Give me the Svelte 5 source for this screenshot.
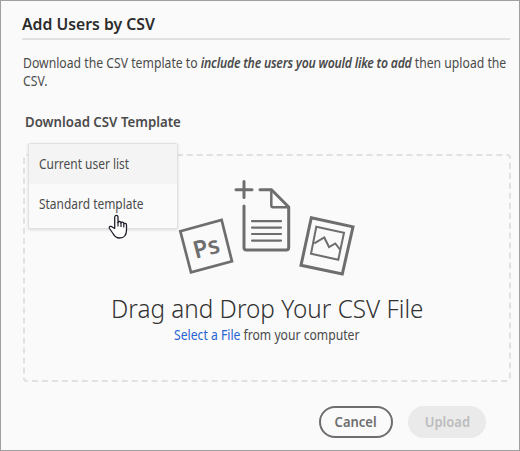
<script>
  const options = ['Current user list', 'Standard template'];
  let active = $state(0);
</script>

<main class="dialog">
  <h1><span class="fit">Add Users by CSV</span></h1>
  <p class="intro">
    <span class="fit">Download the CSV template to <strong>include the users you would like to add</strong> then upload the<br />CSV.</span>
  </p>
  <h2><span class="fit">Download CSV Template</span></h2>

  <section class="drop">
    <div class="menu" role="menu">
      {#each options as option, i}
        <div class="option" class:active={i === active} role="menuitem" tabindex="-1"><span class="fit">{option}</span></div>
      {/each}
    </div>
    <svg class="art" width="180" height="100" viewBox="177 178 180 100" fill="none" stroke="#6e6e6e">
      <path d="M180.3 231.2 221.600 220 232 261.400 191 272.300Z" stroke-width="2.7" />
      <text x="-14" y="8.500" transform="translate(207 247) rotate(-14.5)" class="ps">Ps</text>
      <g stroke-width="3" stroke-linecap="round">
        <path d="M244 181.5V197.500M236 189.700H252" />
        <path d="M260 189.700H271.500L288.700 207V247.500Q288.700 250 286.200 250H246.500Q244 250 244 247.500V206" stroke-linejoin="round" />
        <path d="M271.300 190V205.500Q271.300 207.300 273 207.300H288" stroke-width="2.5" />
      </g>
      <path d="M252 221.200H281M252 227.600H281M252 234H281M252 240.600H281" stroke-width="2.200" stroke-linecap="round" />
      <path d="M311.300 217.700 353 226.800 342.300 274 301 265.300Z" stroke-width="3" />
      <path d="M316.300 226.700 344 232.700 338.300 259.700 311 253.700ZM314.300 243.300 324.300 237.500 329 247 335.300 243.500 340 249.500" stroke-width="2" />
    </svg>
    <div class="title">Drag and Drop Your CSV File</div>
    <div class="hint"><a href="#file">Select a File</a> from your computer</div>
    <svg class="cursor" width="20" height="26" viewBox="0 0 20 26">
      <path d="M6.700 14.500V3.500C6.700 .7 10 .7 10 3.500V8.500C10.500 7 13 7.200 13 9C13.600 7.600 15.800 8 15.800 9.800C16.500 8.900 18.500 9.200 18.500 11V16C18.500 19.500 17 24 11.500 24C7.500 24 6.500 22 5 19.500L1.500 14.500C.5 12.500 3 11.500 4.500 13.200Z" fill="#fff" stroke="#20202e" stroke-width="1.300" stroke-linejoin="round" />
      <path d="M10 8V12.500M13 9V13M15.800 10V13.500" fill="none" stroke="#20202e" stroke-width="1.200" />
    </svg>
  </section>

  <footer>
    <button class="cancel"><span class="fit">Cancel</span></button>
    <button class="upload" disabled><span class="fit">Upload</span></button>
  </footer>
</main>

<style>
  :global(body) { background: #fafafa; }
  .dialog {
    box-sizing: border-box;
    width: 520px;
    height: 451px;
    border: 1px solid #a0a0a0;
    padding: 12px 9px 0 21px;
    display: flex;
    flex-direction: column;
    background: #fafafa;
    color: #4b4b4b;
    font: 14px/18px "Noto Sans", "Open Sans", sans-serif;
    white-space: nowrap;
  }
  .fit { display: inline-block; transform: scaleX(var(--fit)); transform-origin: 0 50%; }
  h1 {
    --fit: .985;
    margin: 0;
    height: 25px;
    border-bottom: 2px solid #e1e1e1;
    color: #2c2c2c;
    font-size: 16px;
    font-weight: 600;
    line-height: 22px;
  }
  .intro { --fit: .872; margin: 14px 0 0 1px; height: 36px; overflow: hidden; }
  .intro strong { font-style: italic; font-weight: 600; letter-spacing: -.25px; }
  h2 { --fit: .945; margin: 23px 0 0 3px; font-size: 14px; line-height: 18px; font-weight: 600; }
  .drop {
    position: relative;
    box-sizing: border-box;
    width: 488px;
    height: 228px;
    margin: 23px 0 0 1px;
    border: 2px dashed #e1e1e1;
    border-radius: 4px;
    display: flex;
    flex-direction: column;
    align-items: center;
    padding-top: 22px;
  }
  .art { flex: none; }
  .ps { fill: #6e6e6e; stroke: none; font: 600 24px "Noto Sans", sans-serif; }
  .title { margin-top: 12px; font-size: 26px; line-height: 36px; font-weight: 300; color: #323232; transform: scaleX(.934); }
  .hint { transform: scaleX(.868); }
  a { color: #2662d0; text-decoration: none; }
  .menu {
    position: absolute;
    left: 3px;
    top: -13px;
    box-sizing: border-box;
    width: 150px;
    height: 86px;
    border: 1px solid #e1e1e1;
    border-radius: 2px;
    background: #fafafa;
    box-shadow: 0 1px 3px rgba(0, 0, 0, .13);
  }
  .option { --fit: .853; height: 40px; line-height: 40px; padding-left: 10px; }
  .active { background: #f4f4f4; }
  .cursor { position: absolute; left: 83px; top: 58px; }
  footer { display: flex; justify-content: flex-end; gap: 15px; margin: 24px 24px 0 0; }
  button {
    --fit: .93;
    box-sizing: border-box;
    height: 32px;
    padding: 0;
    border-radius: 16px;
    font: 600 14px/26px "Noto Sans", "Open Sans", sans-serif;
  }
  button .fit { transform-origin: 50% 50%; }
  .cancel { width: 74px; border: 2px solid #6e6e6e; background: #fafafa; color: #6e6e6e; }
  .upload { width: 78px; border: 2px solid #eaeaea; background: #eaeaea; color: #bcbcbc; }
</style>
